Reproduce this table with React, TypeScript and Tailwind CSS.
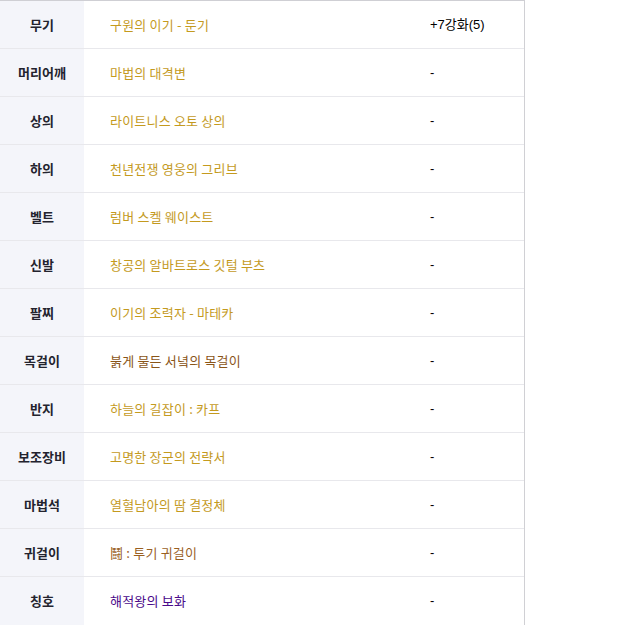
const rows: { label: string; item: string; color: string; value: string }[] = [
  { label: "무기", item: "구원의 이기 - 둔기", color: "text-[#c49a1e]", value: "+7강화(5)" },
  { label: "머리어깨", item: "마법의 대격변", color: "text-[#c49a1e]", value: "-" },
  { label: "상의", item: "라이트니스 오토 상의", color: "text-[#c49a1e]", value: "-" },
  { label: "하의", item: "천년전쟁 영웅의 그리브", color: "text-[#c49a1e]", value: "-" },
  { label: "벨트", item: "럼버 스켈 웨이스트", color: "text-[#c49a1e]", value: "-" },
  { label: "신발", item: "창공의 알바트로스 깃털 부츠", color: "text-[#c49a1e]", value: "-" },
  { label: "팔찌", item: "이기의 조력자 - 마테카", color: "text-[#c49a1e]", value: "-" },
  { label: "목걸이", item: "붉게 물든 서녘의 목걸이", color: "text-[#8a5518]", value: "-" },
  { label: "반지", item: "하늘의 길잡이 : 카프", color: "text-[#c49a1e]", value: "-" },
  { label: "보조장비", item: "고명한 장군의 전략서", color: "text-[#c49a1e]", value: "-" },
  { label: "마법석", item: "열혈남아의 땀 결정체", color: "text-[#c49a1e]", value: "-" },
  { label: "귀걸이", item: "鬪 : 투기 귀걸이", color: "text-[#9a5f1f]", value: "-" },
  { label: "칭호", item: "해적왕의 보화", color: "text-[#4a0a8a]", value: "-" },
];

export default function App() {
  return (
    <div className="w-[638px] h-[625px] bg-white">
      <div className="w-[525px] border-t border-b border-r border-t-[#cfcfd4] border-b-[#cfcfd4] border-r-[#d0d0d4] font-['Noto_Sans_CJK_KR','Noto_Sans',sans-serif] text-[13px]">
        {rows.map((r, i) => (
          <div
            key={r.label}
            className={`flex h-[48px] ${i < rows.length - 1 ? "border-b border-[#e8e8ec]" : ""}`}
          >
            <div className="w-[84px] shrink-0 bg-[#f4f5fa] flex items-center justify-center font-bold text-[#23232e]">
              {r.label}
            </div>
            <div className={`w-[320px] shrink-0 pl-[26px] flex items-center tracking-[0.2px] ${r.color}`}>
              {r.item}
            </div>
            <div className="flex-1 pl-[26px] flex items-center text-black font-['Liberation_Sans','Noto_Sans_CJK_KR',sans-serif]">
              {r.value}
            </div>
          </div>
        ))}
      </div>
    </div>
  );
}
